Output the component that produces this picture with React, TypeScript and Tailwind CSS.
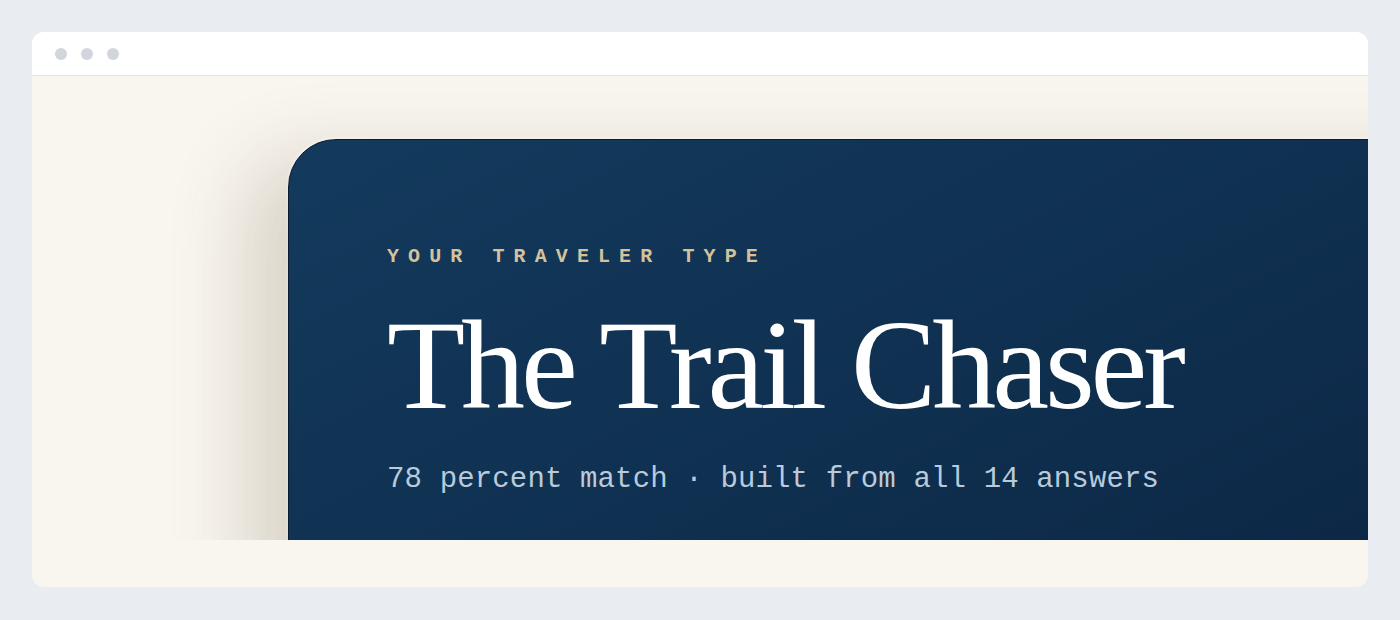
import React from 'react';

const mono = { fontFamily: '"Liberation Mono", "DejaVu Sans Mono", monospace' };
const serif = { fontFamily: '"Liberation Serif", "DejaVu Serif", serif' };

const WindowDots: React.FC = () => (
  <div className="flex h-[44px] items-center gap-[14px] border-b border-[#e4e5ea] bg-white px-[23px]">
    <span className="h-3 w-3 rounded-full bg-[#d2d5dc]" />
    <span className="h-3 w-3 rounded-full bg-[#d2d5dc]" />
    <span className="h-3 w-3 rounded-full bg-[#d2d5dc]" />
  </div>
);

const ResultCard: React.FC = () => (
  <div className="h-[620px] w-[1200px] shrink-0 rounded-tl-[48px] border border-[#0a1c31] bg-gradient-to-br from-[#133a5d] via-[#0f2f4f] to-[#0b2240] pl-[98px] pt-[107px] shadow-[-40px_20px_80px_rgba(90,70,40,0.2),0_0_0_2px_rgba(255,255,255,0.6)]">
    <p className="text-[20px] font-bold leading-none uppercase tracking-[0.455em] text-[#d5c29c]" style={mono}>
      Your Traveler Type
    </p>
    <h1 className="mt-[34px] text-[128px] leading-none tracking-[-0.032em] text-white" style={serif}>
      The Trail Chaser
    </h1>
    <p className="mt-[36px] text-[29px] leading-none tracking-[0.005em] text-[#b9cadb]" style={mono}>
      78 percent match · built from all 14 answers
    </p>
  </div>
);

export default function App() {
  return (
    <div className="min-h-screen bg-[#e9ecf1] p-8">
      <div className="overflow-hidden rounded-xl bg-[#f9f6ef]">
        <WindowDots />
        <div className="flex h-[464px] overflow-hidden pl-[256px] pt-[63px]">
          <ResultCard />
        </div>
        <div className="h-[47px]" />
      </div>
    </div>
  );
}
